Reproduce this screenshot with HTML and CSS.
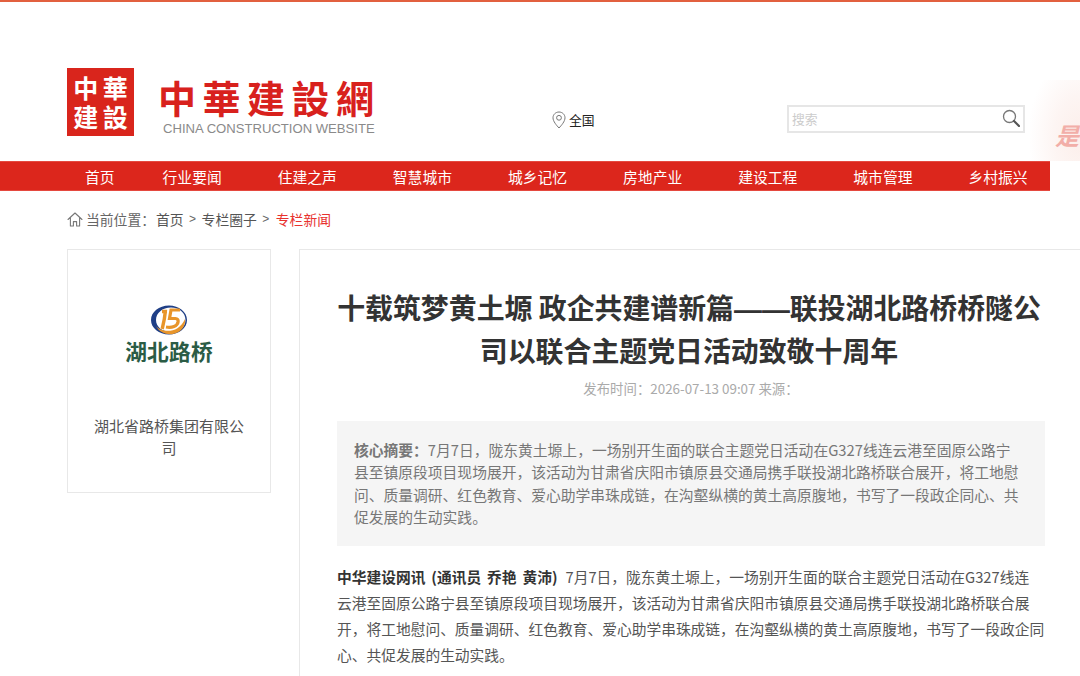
FILE: index.html
```html
<!DOCTYPE html>
<html lang="zh-CN">
<head>
<meta charset="utf-8">
<title>十载筑梦黄土塬 政企共建谱新篇</title>
<link rel="stylesheet" href="styles.css">
</head>
<body>
<div class="topline"></div>
<header class="header">
  <div class="brand">
    <div class="seal"><span>中</span><span>華</span><span>建</span><span>設</span></div>
    <div class="wordmark">
      <div class="wordmark-cn">中華建設網</div>
      <div class="wordmark-en">CHINA CONSTRUCTION WEBSITE</div>
    </div>
  </div>
  <div class="location">
    <svg class="pin" viewBox="0 0 14 18" width="14" height="18"><path d="M7 1C3.6 1 1 3.6 1 6.8c0 3.6 3.6 7.6 6 10.2 2.4-2.6 6-6.6 6-10.2C13 3.6 10.4 1 7 1z" fill="none" stroke="#777" stroke-width="1"/><circle cx="7" cy="6.8" r="2.4" fill="none" stroke="#777" stroke-width="1"/></svg>
    <span>全国</span>
  </div>
  <div class="search">
    <span class="search-hint">搜索</span>
    <svg viewBox="0 0 18 18" width="18" height="18"><circle cx="7.5" cy="7.5" r="6" fill="none" stroke="#777" stroke-width="1.3"/><path d="M12 12l5 5" stroke="#555" stroke-width="2.2" stroke-linecap="round"/></svg>
  </div>
  <div class="deco"><span>是</span></div>
</header>
<nav class="nav">
  <a class="nav-first">首页</a>
  <a>行业要闻</a>
  <a>住建之声</a>
  <a>智慧城市</a>
  <a>城乡记忆</a>
  <a>房地产业</a>
  <a>建设工程</a>
  <a>城市管理</a>
  <a>乡村振兴</a>
</nav>
<div class="crumbs">
  <svg viewBox="0 0 16 15" width="16" height="15"><path d="M1 7.500L8 1l7 6.500M3.400 6v8h3V9.600h3.200V14h3V6" fill="none" stroke="#777" stroke-width="1.100" stroke-linejoin="round" stroke-linecap="round"/></svg>
  <span class="crumb-label">当前位置：</span>
  <span>首页</span><span class="sep">&gt;</span>
  <span>专栏圈子</span><span class="sep">&gt;</span>
  <span class="crumb-current">专栏新闻</span>
</div>
<main class="main">
  <aside class="card">
    <div class="org-logo">
      <svg viewBox="0 0 36 30" width="36" height="30">
        <path fill-rule="evenodd" d="M18 .5C8 .5 0 7 0 15s8 14.500 18 14.500S36 23 36 15 28 .5 18 .5zM20 2.500c8.500 0 14.500 5.500 14.500 12.500S28.500 27 20 27 5 22 5 15 11.500 2.500 20 2.500z" fill="#1f3f86"/>
        <path d="M5 21c5 6 22 9 29-7 1 6-3 13-12 15-7 1-14-2-17-8z" fill="#e8952a"/>
        <path d="M14.500 5c-.5 6-1.800 13-3.300 19M11 6.500h5" fill="none" stroke="#e8952a" stroke-width="3.400"/>
        <path d="M29 5H20l-1.500 8.500h6c4 0 3.500 6-1.500 8-2.500 1-5 1-8 .5" fill="none" stroke="#e8952a" stroke-width="3.200"/>
      </svg>
      <div class="org-logo-text">湖北路桥</div>
    </div>
    <p class="org-name">湖北省路桥集团有限公司</p>
  </aside>
  <article class="article">
    <h1 class="title">十载筑梦黄土塬 政企共建谱新篇<span class="dash">——</span>联投湖北路桥桥隧公司以联合主题党日活动致敬十周年</h1>
    <p class="meta">发布时间：2026-07-13 09:07 来源：</p>
    <div class="summary"><b>核心摘要：</b>7月7日，陇东黄土塬上，一场别开生面的联合主题党日活动在G327线连云港至固原公路宁县至镇原段项目现场展开，该活动为甘肃省庆阳市镇原县交通局携手联投湖北路桥联合展开，将工地慰问、质量调研、红色教育、爱心助学串珠成链，在沟壑纵横的黄土高原腹地，书写了一段政企同心、共促发展的生动实践。</div>
    <p class="body"><b class="lead">中华建设网讯 (通讯员 乔艳 黄沛)</b>7月7日，陇东黄土塬上，一场别开生面的联合主题党日活动在G327线连<br>云港至固原公路宁县至镇原段项目现场展开，该活动为甘肃省庆阳市镇原县交通局携手联投湖北路桥联合展<br>开，将工地慰问、质量调研、红色教育、爱心助学串珠成链，在沟壑纵横的黄土高原腹地，书写了一段政企同<br>心、共促发展的生动实践。</p>
  </article>
</main>
</body>
</html>
```

FILE: styles.css
```css
* { box-sizing: border-box; }
html, body { margin: 0; padding: 0; height: 676px; overflow: hidden; }
body { background: #fff; font-family: "Noto Sans CJK SC", "Liberation Sans", sans-serif; color: #555; }

.topline { height: 2px; background: #e2603f; }

.header { position: relative; height: 159px; display: flex; align-items: flex-start; padding: 66px 0 0 67px; }
.brand { display: flex; width: 485px; }
.seal { width: 67px; height: 68px; background: #d9251c; color: #fff; display: grid; grid-template-columns: 1fr 1fr; padding: 5px 4px; font-family: "Noto Sans CJK TC", sans-serif; font-weight: 700; font-size: 25px; line-height: 29px; text-align: center; }
.wordmark { margin-left: 26px; padding-top: 4px; }
.wordmark-cn { font-family: "Noto Sans CJK TC", sans-serif; font-weight: 700; font-size: 38px; line-height: 50px; letter-spacing: 6.500px; color: #d8211d; white-space: nowrap; margin-left: -2px; }
.wordmark-en { font-family: "Liberation Sans", sans-serif; font-size: 13.100px; line-height: 16px; color: #8a8a8a; white-space: nowrap; margin: -1px 0 0 3px; }

.location { display: flex; align-items: center; gap: 3px; margin-top: 43px; font-size: 12.800px; line-height: 18px; color: #222; width: 235px; }
.search { position: relative; z-index: 1; margin-top: 37px; width: 238px; height: 28px; border: 2px solid #e6e6e6; display: flex; align-items: center; justify-content: space-between; padding: 0 1px 0 3px; background: #fff; }
.search svg { margin-right: 2px; margin-top: -2px; }
.search-hint { font-size: 12.800px; color: #ccc; margin-top: -1px; }
.deco { position: absolute; right: 0; top: 78px; width: 50px; height: 81px; overflow: hidden; background: radial-gradient(ellipse 52px 82px at 100% 70%, #fceeea 0, #fdf5f3 50%, #fff 100%); }
.deco span { position: absolute; left: 25px; top: 40px; font-size: 24px; line-height: 30px; font-style: italic; font-weight: 700; color: #f2aea8; }

.nav { width: 1050px; height: 30px; background: #dc261c; border-top: 1px solid #e5493f; border-bottom: 1px solid #e5493f; display: flex; align-items: center; gap: 56.050px; padding-left: 85px; font-size: 14.780px; color: #fff; }
.nav a { white-space: nowrap; }
.nav-first { min-width: 21px; margin-right: -8px; }

.crumbs { display: flex; align-items: center; height: 20px; margin: 18px 0 0 67px; font-size: 13.800px; color: #555; }
.crumbs svg { margin-right: 3px; }
.crumb-label { color: #666; margin-right: 1px; }
.sep { margin: 0 5.500px; font-family: "Liberation Sans", sans-serif; font-size: 12px; color: #666; }
.crumb-current { color: #e8322e; margin-left: 1px; }

.main { display: flex; align-items: flex-start; gap: 28px; margin: 20px 0 0 67px; }
.card { flex: none; width: 204px; height: 244px; border: 1px solid #e8e8e8; padding: 55px 20px 0; text-align: center; }
.org-logo { display: flex; flex-direction: column; align-items: center; }
.org-logo-text { margin-top: 1px; font-family: "Noto Sans CJK SC", sans-serif; font-weight: 700; font-size: 21.700px; line-height: 30px; letter-spacing: .2px; color: #2b5c45; white-space: nowrap; }
.org-name { margin: 49px 0 0; font-size: 15px; line-height: 22px; color: #555; }

.article { flex: none; width: 800px; height: 500px; border: 1px solid #e8e8e8; padding: 37px 53px 0 37px; }
.title { margin: 0 2px 0 -2px; font-size: 27.900px; line-height: 40px; font-weight: 700; color: #333; text-align: center; }
.dash { font-family: "Liberation Sans", sans-serif; }
.meta { margin: 8px 0 0; font-size: 13.400px; line-height: 20px; color: #aaa; text-align: center; }
.summary { margin-top: 23px; background: #f5f5f5; padding: 18px 22px 17px 17px; font-size: 14.780px; line-height: 22.400px; color: #777; }
.summary b { font-weight: 700; }
.body { margin: 18px 0 0; font-size: 14.740px; line-height: 26px; color: #555; white-space: nowrap; }
.body b { font-weight: 700; color: #333; }
.lead { margin-right: 8px; word-spacing: 2.600px; }
```
